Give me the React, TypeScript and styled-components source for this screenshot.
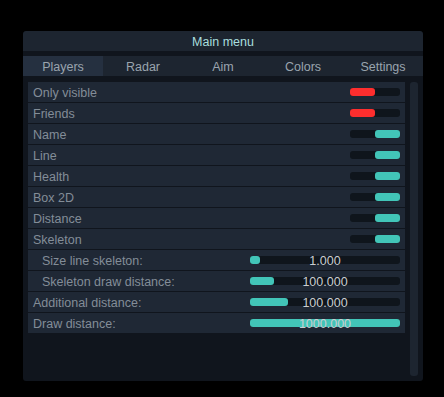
import * as React from 'react'
import styled, { createGlobalStyle } from 'styled-components'

const TEAL = '#42c5b8'
const RED = '#fe2e2e'
const TRACK = '#0f151c'

const GlobalStyle = createGlobalStyle`
  html, body {
    margin: 0;
    padding: 0;
    background: #000;
  }
  body {
    font-family: 'Liberation Sans', Arial, sans-serif;
    font-size: 12.5px;
  }
`

const Page = styled.div`
  width: 444px;
  height: 397px;
  padding: 31px 0 0 23px;
  box-sizing: border-box;
  background: #000;
`
const Window = styled.div`
  width: 400px;
  height: 350px;
  display: flex;
  flex-direction: column;
  background: #10151d;
  border-radius: 3px;
  overflow: hidden;
`
const TitleBar = styled.div`
  height: 20px;
  flex: none;
  box-sizing: border-box;
  padding-top: 2px;
  display: flex;
  align-items: center;
  justify-content: center;
  background: #1d2530;
  color: #a9dfdf;
  border-radius: 3px 3px 0 0;
`
const TabBar = styled.div`
  height: 20px;
  flex: none;
  margin-top: 5px;
  display: grid;
  grid-template-columns: repeat(5, 1fr);
  background: #1d2530;
`
const Tab = styled.div<{ active?: boolean }>`
  display: flex;
  align-items: center;
  justify-content: center;
  padding-top: 2px;
  color: #9aa4ae;
  background: ${props => (props.active ? '#253040' : 'transparent')};
`
const Body = styled.div`
  flex: 1;
  display: flex;
  gap: 5px;
  padding: 6px 5px 5px 5px;
  min-height: 0;
`
const List = styled.div`
  flex: 1;
  display: flex;
  flex-direction: column;
  gap: 1px;
`
const Row = styled.div<{ indent?: boolean }>`
  height: 20px;
  display: flex;
  align-items: center;
  justify-content: space-between;
  padding: 0 5px 0 ${props => (props.indent ? '14px' : '5px')};
  background: #1f2835;
  color: #838d98;
`
const Label = styled.span`
  padding-top: 2px;
`
const Scrollbar = styled.div`
  width: 8px;
  flex: none;
  background: #1d2530;
  border-radius: 3px;
`
const ToggleTrack = styled.div<{ on: boolean }>`
  width: 50px;
  height: 8px;
  display: flex;
  justify-content: ${props => (props.on ? 'flex-end' : 'flex-start')};
  background: ${TRACK};
  border-radius: 3px;
`
const ToggleKnob = styled.div<{ on: boolean }>`
  width: 25px;
  height: 100%;
  background: ${props => (props.on ? TEAL : RED)};
  border-radius: 3px;
`
const SliderTrack = styled.div`
  position: relative;
  width: 150px;
  height: 8px;
  background: ${TRACK};
  border-radius: 3px;
`
const SliderFill = styled.div`
  height: 100%;
  background: ${TEAL};
  border-radius: 3px;
`
const SliderValue = styled.span`
  position: absolute;
  inset: -3px 0 -5px 0;
  display: flex;
  align-items: center;
  justify-content: center;
  color: #c9cdd1;
`

const Toggle = ({ on }: { on: boolean }) => (
  <ToggleTrack on={on}>
    <ToggleKnob on={on} />
  </ToggleTrack>
)

const Slider = ({ fill, value }: { fill: number; value: string }) => (
  <SliderTrack>
    <SliderFill style={{ width: `${fill}px` }} />
    <SliderValue>{value}</SliderValue>
  </SliderTrack>
)

const tabs = ['Players', 'Radar', 'Aim', 'Colors', 'Settings']

const toggles = [
  { label: 'Only visible', on: false },
  { label: 'Friends', on: false },
  { label: 'Name', on: true },
  { label: 'Line', on: true },
  { label: 'Health', on: true },
  { label: 'Box 2D', on: true },
  { label: 'Distance', on: true },
  { label: 'Skeleton', on: true },
]

const sliders = [
  { label: 'Size line skeleton:', indent: true, fill: 10, value: '1.000' },
  { label: 'Skeleton draw distance:', indent: true, fill: 24, value: '100.000' },
  { label: 'Additional distance:', indent: false, fill: 38, value: '100.000' },
  { label: 'Draw distance:', indent: false, fill: 150, value: '1000.000' },
]

export default function App() {
  return (
    <Page>
      <GlobalStyle />
      <Window>
        <TitleBar>Main menu</TitleBar>
        <TabBar>
          {tabs.map((t, i) => (
            <Tab key={t} active={i === 0}>
              {t}
            </Tab>
          ))}
        </TabBar>
        <Body>
          <List>
            {toggles.map(t => (
              <Row key={t.label}>
                <Label>{t.label}</Label>
                <Toggle on={t.on} />
              </Row>
            ))}
            {sliders.map(s => (
              <Row key={s.label} indent={s.indent}>
                <Label>{s.label}</Label>
                <Slider fill={s.fill} value={s.value} />
              </Row>
            ))}
          </List>
          <Scrollbar />
        </Body>
      </Window>
    </Page>
  )
}
